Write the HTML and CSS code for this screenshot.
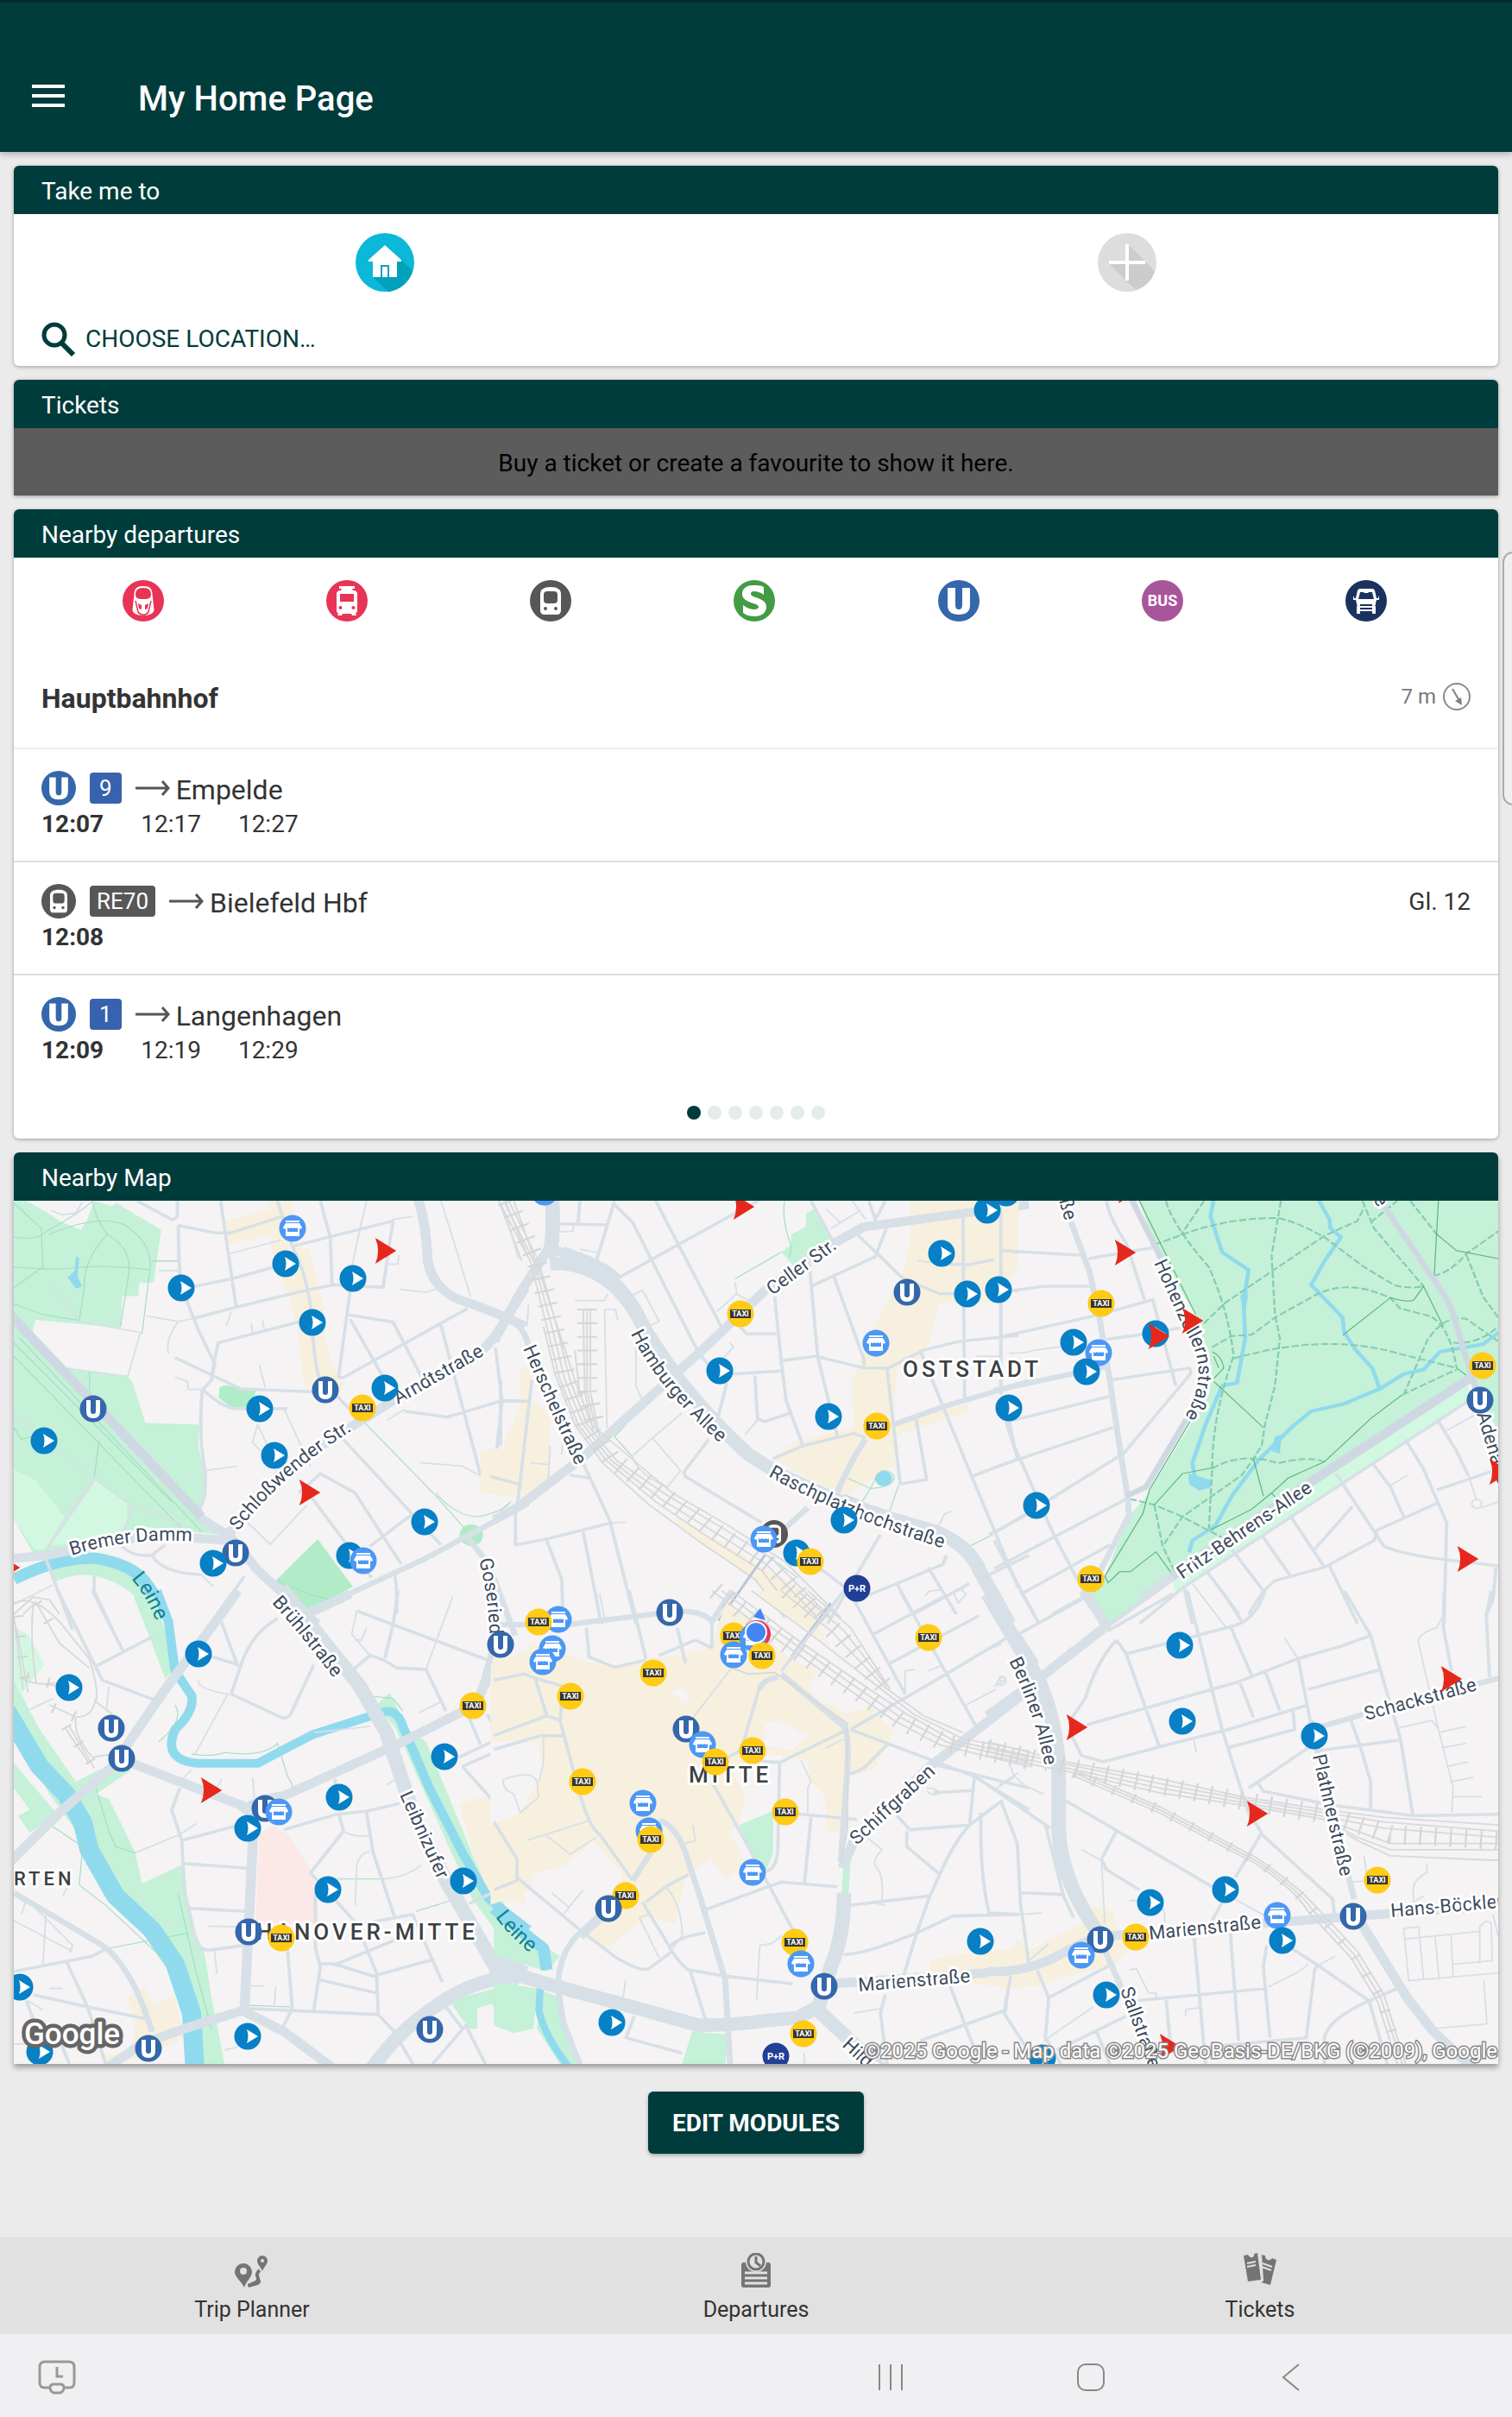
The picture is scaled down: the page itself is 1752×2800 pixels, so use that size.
FILE: index.html
```html
<!DOCTYPE html>
<html lang="en">
<head>
<meta charset="utf-8">
<meta name="viewport" content="width=device-width, initial-scale=1">
<title>My Home Page</title>
<link rel="stylesheet" href="styles.css">
</head>
<body>
<svg class="defs" aria-hidden="true">
  <defs>
    <symbol id="m-ice" viewBox="0 0 48 48"><circle cx="24" cy="24" r="24" fill="#e83456"/><path d="M24 7c8 0 10 3 10.500 9l2 18c0 4-4 7-12.500 7s-12.500-3-12.500-7l2-18C14 10 16 7 24 7z" fill="#fff"/><path d="M24 9c7 0 8.500 3 9 7 0 4-1 6-9 6s-9-2-9-6c.5-4 2-7 9-7z" fill="#e83456"/><path d="M15 24l3 13q2 3 6 3t6-3l3-13" fill="none" stroke="#e83456" stroke-width="1.500"/><path d="M18 27l4 2v5l-3-1zM30 27l-4 2v5l3-1z" fill="#e83456"/></symbol>
    <symbol id="m-ic" viewBox="0 0 48 48"><circle cx="24" cy="24" r="24" fill="#e83456"/><path d="M15 7h18v3h-3l1 2q5 0 5 4v20q0 2-2 2l1 3h-5l-1-2H19l-1 2h-5l1-3q-2 0-2-2V16q0-4 5-4l1-2h-3z" fill="#fff"/><path d="M16 16h16v9H16z" fill="#e83456"/><circle cx="16.500" cy="32" r="2" fill="#e83456"/><circle cx="31.500" cy="32" r="2" fill="#e83456"/></symbol>
    <symbol id="m-re" viewBox="0 0 48 48"><circle cx="24" cy="24" r="24" fill="#575757"/><path d="M24 8c8 0 12 3 12 8v19q0 5-5 5H17q-5 0-5-5V16c0-5 4-8 12-8z" fill="#fff"/><rect x="16" y="13" width="16" height="14" rx="4" fill="#575757"/><circle cx="18" cy="33" r="2" fill="#575757"/><circle cx="30" cy="33" r="2" fill="#575757"/></symbol>
    <symbol id="m-s" viewBox="0 0 48 48"><circle cx="24" cy="24" r="24" fill="#439b45"/><path d="M35 8v9c-4-3-8-4-11-4-3 0-4 1-4 3 0 5 18 4 18 15 0 7-6 11-13 11-5 0-10-1-14-4v-9c5 4 10 5 13 5s5-1 5-3c0-5-19-4-19-15C10 9 16 6 23 6c4 0 8 0 12 2z" fill="#fff"/></symbol>
    <symbol id="m-u" viewBox="0 0 48 48"><circle cx="24" cy="24" r="24" fill="#3467ab"/><path d="M11 9h9v20q0 5 4 5t4-5V9h9v20q0 11-13 11T11 29z" fill="#fff"/></symbol>
    <symbol id="m-bus" viewBox="0 0 48 48"><circle cx="24" cy="24" r="24" fill="#a9559a"/><text x="24" y="30" class="sym-text" font-size="18">BUS</text></symbol>
    <symbol id="m-van" viewBox="0 0 48 48"><circle cx="24" cy="24" r="24" fill="#1c325e"/><path d="M17 10h14q2 0 3 2l2 9h2v-2h1v4h-3l-1 4v2h-2q2 0 2 2v8h-4v-3H17v3h-4v-8q0-2 2-2h-2v-2l-1-4H9v-4h1v2h2l2-9q1-2 3-2z" fill="#fff"/><path d="M17 14h4l1 1h4l1-1h4l2 8H15zM17 28h14v2H17zM17 32h14v2H17z" fill="#1c325e"/></symbol>

    <symbol id="p-stop" viewBox="-16 -16 32 32" overflow="visible"><circle r="15.500" fill="#0780c6"/><path d="M-1-8L12 0-1 8Q2 0-1-8z" fill="#fff"/></symbol>
    <symbol id="p-u" viewBox="-16 -16 32 32"><circle r="15.500" fill="#3467ab"/><path d="M-8-10h5V3q0 3 3 3t3-3v-13h5V3q0 8-8 8T-8 3z" fill="#fff"/></symbol>
    <symbol id="p-taxi" viewBox="-16 -16 32 32"><circle r="15.500" fill="#ffcb14"/><rect x="-12" y="-5" width="24" height="10" fill="#38352d"/><text y="3" class="sym-text" font-size="9">TAXI</text></symbol>
    <symbol id="p-shop" viewBox="-16 -16 32 32"><circle r="15.500" fill="#4d97f5"/><path d="M-8-9H8v2H-8zM-8-6H8l3 5q-1 3-3 1v9H-8v-9q-2 2-3-1z" fill="#fff"/><path d="M-6-1q2 2 4 0 2 2 4 0 2 2 4 0V4H-6z" fill="#4d97f5"/></symbol>
    <symbol id="p-park" viewBox="-16 -16 32 32"><circle r="15.500" fill="#213f94"/><text y="4" class="sym-text" font-size="11">P+R</text></symbol>
    <symbol id="p-red" viewBox="-16 -17 32 34"><path d="M-13-16L13 0-13 16Q-6 0-13-16z" fill="#e6281c"/></symbol>
  </defs>
</svg>

<header class="app-bar">
  <button class="menu" aria-label="Menu"><span></span><span></span><span></span></button>
  <h1>My Home Page</h1>
</header>

<main>
  <section class="card">
    <h2>Take me to</h2>
    <div class="places">
      <button aria-label="Home"><svg viewBox="0 0 68 68"><circle cx="34" cy="34" r="34" fill="#0bb8d7"/><path d="M52 30L66 44A34 34 0 0 1 38 68L20 51z" fill="#00a1bb"/><path d="M34 14L53 31v2h-5v18H20V33h-5v-2z" fill="#fff"/><path d="M29 51V37h10v14h-2V39h-6v12z" fill="#0ba0bd"/></svg></button>
      <button aria-label="Add place"><svg viewBox="0 0 68 68"><circle cx="34" cy="34" r="34" fill="#ddd"/><path d="M35 13L66 44A34 34 0 0 1 44 66L14 36 33 33z" fill="#ccc"/><path d="M34 13v42M13 34h42" stroke="#fff" stroke-width="4"/></svg></button>
    </div>
    <button class="choose"><svg viewBox="0 0 40 42"><circle cx="15" cy="16" r="12" fill="none" stroke="#003c3b" stroke-width="5"/><path d="M24 26L37 39" stroke="#003c3b" stroke-width="6"/></svg>CHOOSE LOCATION…</button>
  </section>

  <section class="card square">
    <h2>Tickets</h2>
    <p class="empty">Buy a ticket or create a favourite to show it here.</p>
  </section>

  <section class="card">
    <h2>Nearby departures</h2>
    <div class="modes">
      <button aria-label="High-speed train"><svg><use href="#m-ice"/></svg></button>
      <button aria-label="Long-distance train"><svg><use href="#m-ic"/></svg></button>
      <button aria-label="Regional train"><svg><use href="#m-re"/></svg></button>
      <button aria-label="Suburban train"><svg><use href="#m-s"/></svg></button>
      <button aria-label="Light rail"><svg><use href="#m-u"/></svg></button>
      <button aria-label="Buses"><svg><use href="#m-bus"/></svg></button>
      <button aria-label="On-demand"><svg><use href="#m-van"/></svg></button>
    </div>
    <div class="station">
      <h3>Hauptbahnhof</h3>
      <span class="distance">7 m <svg viewBox="0 0 32 32"><circle cx="16" cy="16" r="15" fill="none" stroke="#8a8a8a" stroke-width="2"/><path d="M11 7l7 12" stroke="#808080" stroke-width="2"/><path d="M14 21l7-4 1 9z" fill="#808080"/></svg></span>
    </div>
    <ul class="departures">
      <li>
        <div class="line"><svg class="mode"><use href="#m-u"/></svg><span class="badge u">9</span><svg class="arrow" viewBox="0 0 40 20"><path d="M0 10h38M31 2l7 8-7 8" /></svg><span class="goal">Empelde</span></div>
        <div class="times"><b>12:07</b><span>12:17</span><span>12:27</span></div>
      </li>
      <li>
        <div class="line"><svg class="mode"><use href="#m-re"/></svg><span class="badge">RE70</span><svg class="arrow" viewBox="0 0 40 20"><path d="M0 10h38M31 2l7 8-7 8" /></svg><span class="goal">Bielefeld Hbf</span><span class="track">Gl. 12</span></div>
        <div class="times"><b>12:08</b></div>
      </li>
      <li>
        <div class="line"><svg class="mode"><use href="#m-u"/></svg><span class="badge u">1</span><svg class="arrow" viewBox="0 0 40 20"><path d="M0 10h38M31 2l7 8-7 8" /></svg><span class="goal">Langenhagen</span></div>
        <div class="times"><b>12:09</b><span>12:19</span><span>12:29</span></div>
      </li>
    </ul>
    <div class="dots"><i class="on"></i><i></i><i></i><i></i><i></i><i></i><i></i></div>
  </section>

  <section class="card square map-card">
    <h2>Nearby Map</h2>
    <svg class="map" viewBox="16 1391 1720 1000" role="img" aria-label="Map of Hannover">
      <!-- north-west -->
      <g transform="translate(0 1330) scale(.3827 .3444)">
        <path class="green" d="M42 178H80L140 215 180 245 245 275 265 240 285 178 340 195 352 185 488 275 465 452H422L418 498H370L366 605 108 578 95 630 190 738 387 768 402 790 440 925 603 930 600 1000 622 1100 620 1160 605 1220 660 1300 440 1275 130 1370H105L42 1250zM165 1460Q200 1440 250 1435Q350 1440 420 1520L440 1570H490L440 1470 380 1400 260 1380 140 1400z"/>
        <path class="green-light" d="M42 1080L110 1120 195 1240 140 1350H105L42 1250zM284 1115L385 1195V1250L365 1300 215 1330 142 1340z"/>
        <path class="green-deep" d="M665 805L680 798 775 812 765 872H700L662 840zM962 1315L1068 1475 935 1556 835 1455z"/><circle class="green-deep" cx="1427" cy="1302" r="36"/>
        <path class="cream" d="M805 178H885L900 330 935 340 975 520 985 650 1010 740 1045 800 1020 835 920 795 900 600 880 520 820 340 820 290 690 325 680 245 820 205zM1568 890L1530 970 1528 1020 1505 1025 1490 1160 1568 1170z"/>
        <path class="water" d="M230 365L240 370 235 430 248 465 230 473 205 435 225 415z"/>
        <path class="river" stroke-width="38" d="M42 1450Q180 1375 290 1380 400 1400 440 1460 480 1520 500 1580"/>
        <path class="trail" d="M42 185L125 270 130 400 42 470M42 300Q120 310 140 280 220 235 280 180 290 240 325 290 250 380 255 470L240 580M325 290Q400 340 390 420L365 600M150 290Q300 220 380 260 460 320 455 400L430 625M42 400Q150 410 200 405 320 390 455 410M42 525L130 560 240 580M460 380H540M42 655L520 1190M42 700L560 1290M60 640L610 1290M270 750Q280 850 240 890M300 985L285 1110M42 940L65 980 110 965M1105 925L1320 1170 1415 1290M1320 1160Q1380 1240 1450 1240 1530 1220 1545 1190M835 1455L935 1500 1000 1520"/>
        <path class="road s" d="M150 450L245 585 425 620 387 768 200 740M445 565L540 583 590 572M540 583Q500 640 510 690M155 210L190 225 230 218 250 180M415 178M1335 178L1370 300 1425 500M1110 178L1090 270 1050 480M1210 475L1290 485 1320 475M1190 240L1250 230M695 355L850 310M480 412H545M700 550L685 600M785 730L803 805M530 770L568 785 570 812 610 812M780 930L765 990 790 1020M780 930L810 1000M860 877L940 1070M620 1085L720 1070M1270 1058L1400 1070 1450 1100M1175 390H1205L1208 360M1172 915L1225 880M765 620L760 590M800 610L795 580M750 1260L818 1333 930 1200M42 900L285 1112 390 1195 570 1275M390 1195Q400 1240 365 1300M42 1535L160 1470M610 1435L645 1475"/>
        <path class="road" d="M415 178L520 240Q540 240 537 210V178M540 260L650 285 700 285 855 230M540 260Q540 400 550 470L600 610 650 725 640 780 612 815Q605 900 610 1000L622 1100 620 1170 605 1215M668 178L715 535M840 178L885 330Q940 450 945 600 950 700 965 770L1060 880M970 178L1000 300 1005 460M887 330L1190 245 1160 468 1010 460 920 480 715 535 590 572M590 465L700 440 830 400M905 585L660 655 640 770M530 705L730 810 950 820M612 810Q680 880 720 877H870M1060 480L1025 770 1040 772 1415 540M1050 560L1190 585 1290 800M1060 575L1165 780M1335 595L1455 1100 1568 1130M1500 670L1520 850 1495 1105M1225 885L1355 905 1520 850H1568M1040 980L1335 1335M905 1160L970 1095 1075 1160 1215 1400M940 1170L1125 1445M1120 1340L1250 1230M140 1350L285 1115M740 1440L660 1568M135 1370L220 1620M285 1440V1490L340 1620M370 1340Q400 1375 460 1370L500 1335M460 1370Q490 1430 610 1435M1195 1430Q1205 1500 1200 1568"/>
        <path class="road m" d="M920 1570L1280 1385 1600 1195M1415 1310L1480 1400 1560 1640"/>
        <path class="road l" d="M600 1240L700 1310 780 1420 960 1600M690 1300L860 1080 1060 940 1190 850 1460 680Q1500 640 1540 560L1590 470M1265 170Q1290 250 1295 380 1310 470 1390 510 1500 550 1590 600M42 1380L140 1370 420 1310H560L690 1320"/>
        <path class="road l blue" d="M30 560L610 1240"/>
        <path class="rails" d="M1510 178L1580 380M1530 178L1600 370M42 1568L100 1510 150 1520 180 1568M70 1568L110 1525"/>
      </g>
      <!-- north -->
      <g transform="translate(580 1330) scale(.3827 .3444)">
        <path class="cream" d="M1240 178H1568V395L1500 520H1330L1300 640 1280 700 1200 740 1190 920 1415 860V885L1200 965 1195 1065 1060 1160 1000 1155 820 1040 900 985 1070 940 1065 780 1085 720 1110 650 1215 430 1240 310zM58 740L90 745 95 850 150 905 145 1120 60 1175-60 1160V1020L50 1000 58 850zM540 1240L900 1480 980 1568H900L530 1260z"/>
        <path class="green" d="M950 205L1005 310 885 395 850 350 880 325V290L925 265V220z"/><circle class="water" cx="1160" cy="1112" r="26"/>
        <path class="trail" d="M860 178Q850 240 880 330L875 370M710 440L850 350M1050 1110L1120 1145 1140 1100Q1160 1070 1190 1100 1200 1140 1120 1145L1095 1190 1040 1165M1205 1135L1175 1230M345 970L400 1040M380 930L345 970M0 1220L30 1190M1410 1345L1490 1300M800 1365L900 1445"/>
        <path class="road s" d="M240 340L295 352M225 513H315L325 490M315 540L322 940M315 543H348L355 580M400 495L430 478 480 583 410 620V800L430 850M400 1035L460 975 550 890M400 1040Q420 1100 505 1140L545 1085 460 975M655 550L715 490 710 450M715 490L760 520M670 710L705 670 695 655M740 965L778 915M985 205L1028 250M1000 270L1090 210M1065 178L1105 240M1440 700H1515M1262 378L1340 390M180 282L220 280V258M145 1120L150 1000M90 1058L150 1065M185 1030L190 960M330 1262L380 1258M1320 1285L1345 1230 1365 1222M1285 1505L1300 1490 1340 1485M1370 1490L1385 1530 1410 1500 1390 1480M85 525L80 600M55 375L20 240"/>
        <path class="road" d="M345 178L290 380M345 190L400 250 600 690 630 730M470 178L560 370 670 605M180 255L320 258M240 178L235 250M360 435L700 225 780 178M940 178L1010 320M1080 290L1220 440 1330 490H1420M1115 178L1135 240 1165 178M1135 230V255M1170 265L1135 365 940 465M935 390L960 700 1020 970M1010 435L1100 710V738M830 500L850 720 865 850 915 1000M725 600L745 625H835M850 715L955 700 1100 740H1175L1280 680 1390 650 1568 630M700 760L850 750M770 765L778 910 800 920 880 890M685 790L660 900M1400 225L1405 840M1515 180V800M1515 350H1568M1340 390L1420 392 1515 370M1550 480H1568M1170 740L1210 1130 1290 1115 1258 910M1270 680L1340 870 1425 1100 1568 1480M825 1045L920 1000 1070 960 1105 975M1425 1105L1568 1045M1530 920L1568 1050M630 980L555 1090 560 1105 790 1260M0 850L85 852M0 780V1000M95 780L50 1210M-30 1105L55 1130M250 1060L330 1250 410 1600M45 1210V1335L140 1315 330 1262M140 1320L185 1450 190 1600M250 1290L305 1600M1150 1300L990 1600M1100 1510L1200 1465 1340 1400 1350 1370M1200 1465L1250 1568M1295 1410L1380 1568M1250 1568L1420 1465M1470 1440L1600 1370M1480 1300L1600 1230M950 1400L1040 1475M210 1100L270 1110"/>
        <path class="road m" d="M1190 930L1340 870 1600 785M1105 980Q1060 1050 1015 1170M30 570Q80 620 85 670M860 1280L930 1210M190 340Q330 390 360 440"/>
        <path class="road l" d="M1600 190L1300 235 1100 265 960 350 800 480 600 690 440 850 250 1040 50 1210-20 1250M-20 650Q60 480 110 400L150 330M160 340Q230 370 340 440 400 500 440 600L540 780"/>
        <path class="road xl" d="M155 160Q165 300 145 370M150 390Q250 380 340 460 400 520 440 620L540 780Q640 920 750 1030L850 1100 1010 1180 1180 1245 1320 1290Q1420 1340 1450 1420L1540 1600"/>
        <path class="rails" d="M-5 178L90 380 140 600 180 780 235 930 320 1050 470 1190 630 1310 790 1420 900 1580M10 178L100 380 155 600 195 780 250 930 335 1050 485 1180 645 1290 805 1400 960 1580M25 178L115 380 170 600 210 780 262 930 350 1050 500 1165 660 1270 820 1380 1000 1580M40 178L128 450 225 780 275 930 520 1160 690 1270 860 1390 1030 1580M130 600L165 760 225 930 310 1060 450 1200 610 1330 770 1450 860 1580M250 540L255 820 280 950M262 540V820L290 950M272 540V820L300 970M225 680L240 830"/>
        <path class="ties" d="M20 178L108 380 160 600 200 780 255 930 340 1050 495 1170 650 1290 810 1400 980 1580M262 540V820L290 950"/>
        <path class="bridge" d="M800 1370L660 1590M990 1555L970 1590"/>
      </g>
      <!-- north-east -->
      <g transform="translate(1152 1330) scale(.3827 .3444)">
        <path class="cream" d="M0 178H75L55 400 0 415z"/>
        <path class="green" d="M440 178H1526V700L1450 770 1480 860 1526 950V700L1430 800 545 1440 345 1600 330 1568 285 1500 335 1440 410 1235 455 1180 650 830 660 740 610 560 490 340z"/>
        <path class="green-light" d="M1430 790L1450 840 1340 930 1260 980 550 1500 540 1450z"/>
        <path class="river" stroke-width="12" d="M665 170L655 230 690 350 770 410 755 520 760 640 735 790 690 800 640 930 600 1060 610 1120M980 170L1015 240 1018 270 1050 300 1000 380 960 460 1055 570 1060 620 1095 680 1145 740 1167 810M1540 610L1480 660 1350 685 1300 745 1240 760 1167 810 1060 860 960 885 900 940 800 1050 720 1170 670 1270 600 1320 590 1360"/>
        <path class="water" d="M588 1095L660 1118 655 1142 620 1152 590 1130zM745 500L765 460 768 500 758 560zM850 970L870 965 865 1028 840 1020z"/>
        <path class="walk" d="M520 178Q540 260 650 400 710 550 725 700 660 900 660 1080L650 1280M485 325L565 293Q700 235 860 235 920 250 1000 300L1120 400 1210 460Q1250 475 1300 465M635 178L565 293M868 178L840 360 850 560 865 640 850 800 820 930 810 1000 785 1045 750 1100 570 1240 510 1340M635 590L700 520 1000 295 1100 245 1120 200M660 670L720 632 780 628 850 570 980 490Q1080 440 1200 505L1230 540 1320 565Q1380 600 1400 740M725 708Q1000 620 1220 690L1400 740M485 1200L510 1340 545 1420M660 1078Q750 1020 860 1060 950 1035 1000 1055M410 1180L485 1200 560 1235 690 1310M1115 178L1150 270 1300 465M1260 178L1340 290M1330 430Q1380 420 1430 355L1526 280M1430 360L1480 500 1526 570M1240 830L1310 650Q1360 560 1430 575L1526 650M1235 830L1400 745M1140 250L1220 178M1390 655Q1470 660 1526 600"/>
        <path class="lane" d="M440 178L610 560M630 850L470 1150 450 1230 335 1440 345 1462 380 1425H412L490 1358 540 1435M665 785L815 940M655 1285L780 1215 840 1160 890 1110 1000 1055 1140 910 1235 830M785 1045L815 1170M840 1160L855 1180M1055 630L1200 503Q1250 520 1270 512L1300 465 1360 600M1345 178L1332 435M1340 290L1400 345 1526 372M1400 740L1430 765M660 1076L570 1095 485 1200M660 685Q690 700 695 740L665 775M665 700L680 740"/>
        <path class="road s" d="M45 690Q100 690 120 680L200 668M1370 950L1460 895M1200 1135L1252 1100M1435 1100L1460 1180M600 1465L700 1610M1475 1210L1526 1190"/><circle class="road s" cx="1461" cy="1197" r="15"/>
        <path class="road" d="M0 640L320 560 480 510 550 800M340 178Q350 240 400 320L455 510M20 345L260 360M285 372L480 335M50 480L150 465H290M340 643L460 625 590 600M355 780L590 740Q600 750 590 765L390 1030M60 915L350 835M0 1075L360 940M20 200V830M45 915L60 1000 180 1300 280 1510M0 1295L120 1215 380 1035M0 1415L400 1180M90 1495L350 1335M0 1320L120 1568M175 1568L270 1510M720 1350L815 1490M645 1425L740 1568M810 1300L900 1445M895 1235L1000 1410M1035 1095L1180 1340Q1250 1370 1370 1385L1526 1405M1145 1060L1200 1140 1240 1240M1245 980L1300 1080 1370 1260 1362 1600M1340 910L1400 1020 1435 1100M1340 1150L1526 1080M1150 1290L1340 1195M970 1350L1085 1205M770 1568L815 1490 850 1455 1000 1410 1150 1320 1160 1290M1015 1405L1100 1600M575 1480L600 1600M1520 1405L1510 1520 1490 1568M1450 840L570 1480 440 1600"/>
        <path class="road m" d="M0 815L340 735M230 240L290 420 320 580 350 780 375 970 405 1180 408 1235 285 1500"/>
        <path class="road m blue" d="M415 170L500 360 590 580 650 720M610 860L460 1140 400 1170M1180 195L1330 440Q1390 530 1400 600L1455 800 1500 960"/>
        <path class="road l" d="M540 1440L340 1600M275 1480L340 1610"/>
        <path class="road l blue" d="M1440 775L970 1115 540 1440"/>
      </g>
      <!-- south-west -->
      <g transform="translate(0 1850) scale(.3827 .3571)">
        <path class="green" d="M42 540L170 700 90 765 55 710 90 690 42 620zM42 270L120 430 230 600 300 560 400 560 290 640 330 655 410 830 430 930 550 870 580 1060 620 1160 640 1300 680 1515H600L590 1350 530 1170 340 970 270 820 150 640 42 440zM405 0H470L530 230 500 265 460 150zM1140 350L1180 310 1235 430 1290 470 1440 860 1568 1060V1180L1430 980 1200 430zM1360 1310L1568 1250V1410L1520 1400 1490 1320 1445 1335V1400H1420z"/>
        <path class="green-light" d="M42 100L85 120 135 220 60 320 42 270z"/>
        <path class="pink" d="M825 740L870 770 955 910 950 1060H775L785 770z"/>
        <path class="cream" d="M385 1300L440 1265 460 1320 530 1295 555 1430 540 1440 420 1500 310 1515V1490L400 1475 410 1380zM1590 170L1480 240V300L1530 310 1540 360 1590 340zM1590 550L1490 600 1495 640 1390 670 1440 860 1480 960 1590 1000z"/>
        <path class="river" stroke-width="58" d="M20 370L120 550 200 640 250 730 270 820 350 970 460 1080 530 1190 580 1350 590 1530"/>
        <path class="river" stroke-width="28" d="M475-20L510 80 530 240 580 320Q590 370 530 430 490 530 600 540H780Q850 500 950 445L1140 380Q1200 350 1220 420L1300 620 1400 830 1480 980 1600 1080"/>
        <path class="trail" d="M580 510Q640 520 680 505 800 520 840 475L870 580 890 620M290 620L330 760 350 810 410 830M540 965L590 1200 640 1400M330 1140L570 1090M1020 915H1150M1260 1020L1365 985M240 935L320 1000 520 1200M160 745L250 810 240 935M755 1325L880 1330M1110 320L1190 330 1220 370M480 470Q560 400 530 350"/>
        <path class="rails" d="M42 60L70 300M50 100L85 310M42 20Q100-10 180 80L270 200Q300 300 290 340L340 380M110 20L180 150 270 230M100 30Q90 150 110 280L190 290M60 260Q120 300 200 270M150 350L230 390Q280 390 290 330M230 390Q220 450 280 520L340 510M200 430L270 540M210 420L285 555"/>
        <path class="ties short" d="M55 60L80 310M80 260L190 290M160 360L230 390M200 420L285 550M110 20L180 130"/>
        <path class="road s" d="M590 510L690 315Q600 300 600 270M1080 45L1065 120 1120 190M1110 100L1095 140 1075 140M1290 235L1370 0M1270 375L1335 340M410 830L545 770 595 735M330 290L322 370M90 365L160 330M545 600L580 560M765 585L770 650M1170 610L1200 590M1160 915Q1230 910 1275 870M1075 1000Q1080 900 1080 870 1090 830 1120 825M630 1068L715 1070M650 1150L657 1225M835 1265L830 1330M755 1262H800M42 1050L220 1150M65 1030L80 980 220 1130 210 1155M130 1195L140 1010M150 1270H190M85 1310L130 1340M1040 760Q1070 780 1120 775M190 970L220 910M42 1450H100M680 1470L720 1460M670 590Q670 600 640 640M950 440L1120 420"/>
        <path class="road" d="M175-20L310 270 470 335M280-20L375 180M290 225L460 130M665 65L720 225M630 190L720 220M950 220L880 380Q865 400 850 390L700 315 730 220Q760 120 840 70M1205-20L1190 90 1165 200M1080 45L1190 90 1490 210M1070 235L1120 190Q1160 200 1200 230L1290 235 1350 370M1390 520L1590 420M1400 550L1590 460M1400 550L1500 670 1560 880M1420 390L1455 480M1475 380L1510 450M545 620L520 690 550 790 560 960 590 1100Q600 1150 640 1145L740 1130M550 790L740 735M560 865L750 880M575 1010L745 1020M860 755L1020 705 1110 695 1210 670M1025 700L1040 760 940 895 1080 1060 1140 1220 1145 1350M1110 700L1130 830 1195 1040M955 960V1140L970 1200 950 1340M970 1190H1010L1130 1230 1315 1175M1010 1195L1250 1090M960 1240L1140 1285M870 1140L885 1335 850 1410M750 1335L1145 1355 1190 1405M1100 1060L1250 1030 1310 1180 1340 1250M42 1215L210 1180 280 1165 315 1145M200 1180L265 1330 320 1515M100 1290L265 1330 450 1370M80 1310L100 1370M185 1450L210 1515M1310 1515L1410 1390 1470 1515M1190 1405L1250 1515M1420 995L1590 910M1400 1400L1350 1330M1015 590V640"/>
        <path class="road m" d="M42 960L310 1130Q400 1200 460 1410"/>
        <path class="road l" d="M30 860L180 700 340 550 500 300 660 70 720-20M400 540L740 680M735 700Q760 660 860 645L1200 480 1440 350 1510 180M770 700L740 1340M740 1340L560 1400 430 1450 320 1530M740 1345L860 1410 1010 1530M920 60L1060-10"/>
        <path class="road xl" d="M850-30L1000 170 1090 290 1170 440 1250 700 1350 920 1500 1200M1120 1540Q1200 1410 1330 1320 1450 1230 1590 1230M1490 1160L1590 1220"/>
      </g>
      <!-- south -->
      <g transform="translate(580 1850) scale(.3827 .3571)">
        <path class="cream" d="M-30 180L70 200 90 150 260 210 350 230 440 200 540 190 640 160 680 20 720 40 860 190 960 240 930 300 960 330 1050 380 1120 355 1190 440 1130 560 1060 580 1050 760H990L980 640 940 600 930 530 820 510 700 560 740 650 720 740 690 760 740 860 680 920 640 850 560 900 530 1060 440 1040 320 1140 250 1100 380 1000 340 890 230 830 200 870 95 900 90 950-30 1000zM1568 1140L1380 1160 1300 1180V1240L1568 1270zM760-20L1000 160 940 60 870-20z"/>
        <path class="land" d="M515 310L550 295 580 320 560 345zM-30 470H110L130 560 60 700-30 740zM200 870L280 790 370 900 320 990 240 1080 95 960V900zM800 410L840 400 930 450 880 500 800 480z"/>
        <path class="green" d="M722 740L825 695V830L805 885 770 850zM1040 840L1060 850 1050 1040 1030 1150 1005 1155 1030 1000zM-20 1030L180 1165 140 1215-20 1160zM-20 1250L110 1270 100 1400 40 1415-20 1390zM130 1280L180 1300 190 1380 245 1515H180L110 1400zM580 1410L690 1420 680 1515H550z"/>
        <path class="river" stroke-width="36" d="M-20 1010L70 1090 130 1140 140 1210"/><path class="river" stroke-width="22" d="M120 1270 116 1340Q130 1420 210 1530"/>
        <path class="bridge" d="M690-10L650 60M1000 20L880 195"/>
        <path class="road s" d="M300-10L315 70M580 395L700 230M15 590Q100 560 110 600L115 650 60 700 40 640Q0 620 10 590M130 455V540L115 600M80 790L270 725M135 770L210 835 290 780M560 800L590 790 582 740M155 960L205 1005M190 1030L250 950M500 940Q550 1000 550 1100L520 1140M420 1040L480 1170M420 1040L450 1030M775 1310L785 1130 820 1125 850 1100M985 490L1040 460M910 530L940 600 930 620V700M1110 780L1155 820Q1120 860 1140 880 1160 900 1155 990M1140 995L1165 1000M1410 350L1500 300M1225 310V240L1255 235M1295 240L1340 220M370 1310L378 1245M1290 620Q1320 620 1330 635 1310 650 1290 630M1070 1350L1150 1335M1500 290Q1510 250 1530 265 1530 290 1510 285M920 1515V1480M1510 610L1568 570"/>
        <path class="road" d="M260 100L268 195 345 228 440 205M480 190L590 140 640 165V70M390-20L440 200M535 100L560 215M785 290L730 490M690 520L740 490M760 520Q800 540 850 535L1050 430M845 540L840 800Q840 880 805 890M860 700L1080 722M940 715L920 930M620 1015L810 940 850 925 1020 940M-20 450L140 385 180 400 240 640Q270 750 300 770L400 920M105 265L140 385M110 265L190 290 180 400M-20 495L120 450H195M-20 730L50 850V920L-20 950M55 915L240 1080 350 1170Q430 1220 450 1205L520 1150M440 990L500 940 570 900M430 990L520 1150Q550 1200 570 1210L680 1230 885 1255M515 1130Q550 1100 620 1090M575 1215L620 1370M640 600L740 790 820 950 890 1090M1060 430L1430 580 1600 690M1060 575L1100 555 1170 480M1060 1000L1300 970M1520 660L1420 740M1040 1160Q1100 1160 1260 1090L1370 1035 1568 1030M1200 710L1240 755 1420 740Q1370 800 1330 900L1230 810V760M1220 1230L1260 1090 1300 970 1330 900M1455 700Q1450 900 1480 1030M1435 580L1420 740M1310 635L1430 628M1130 120L1340 0M1180 215L1450 60M1060 430L1350 250 1568 110M1060-10L1225 315M1210-20L1440 420M1165 1290L1150 1350 1170 1515M1360 1260L1440 1480M1270 1440L1530 1340 1530 1300M405 1360L380 1430 550 1480M-20 270L70 250 110 265M850 240L1040-20M1300 540L1600 620"/>
        <path class="road m" d="M840 260Q790 270 785 300M-10 90H200L470 55Q600 30 640 80L700-20M400 920L455 830M480 725Q530 740 560 830L600 960 680 1240 695 1515M850 250L1040 420Q1055 440 1050 560L1030 860M330 1030L240 1090Q170 1160 175 1280L190 1380 245 1530M-10 110Q-30 200-60 300"/>
        <path class="road l" d="M330 1010L240 1100M1035 880L1070 790 1300 550 1600 300M1000 1255L1600 1210"/>
        <path class="road xl" d="M-30 1200L140 1255 400 1330 600 1390Q700 1390 800 1375L900 1365 960 1330M1040 960Q1040 1100 1000 1200L960 1340 1060 1440 1150 1530"/>
        <path class="rails" d="M640-20L840 140 1040 290 1190 400 1330 480 1600 550M670-20L860 130 1060 280 1210 390 1350 470 1600 535M700-20L900 140 1090 280 1230 380 1370 465 1600 520M760-20L950 130 1130 280 1250 380 1400 460 1600 500M850-20L1000 110 1160 290 1280 385 1400 440M900-20L1040 110 1170 290M930-20L1060 100 1180 300M700 230L750 250 830 245 1050 410V760L1030 860"/>
        <path class="ties" d="M650-20L860 150 1060 290 1210 400 1350 475 1600 530M870-20L1010 110 1170 300"/>
      </g>
      <!-- south-east -->
      <g transform="translate(1152 1850) scale(.3827 .3571)">
        <path class="green" d="M300 0H455L345 83z"/>
        <path class="cream" d="M295 1000L360 1020 375 1090 410 1140 350 1210 330 1200 130 1260 20 1275V1240L-20 1245V1160L60 1160V1120L80 1115 100 1150 280 1050z"/>
        <path class="road s" d="M1360 60L1340 100Q1280 120 1285 150L1345 430M880 135L920 200M1225 425L1325 400 1345 430 1390 620 1385 700M1345 440L1430 420M1355 490L1430 475M1370 550L1435 535M1380 600L1450 585M1390 648H1478M1240 1075L1285 1070 1300 1240 1255 1245zM1240 1110L1470 1085M1335 1100L1347 1238M1383 1095L1390 1235M1255 1245L1526 1220M1510 1030L1526 1100M1490 1385L1335 1400M1482 1245L1492 1385M1470 1190V1070Q1490 1040 1505 1060L1508 1180 1385 1192M265 820L325 855 335 1060M605 465L612 505M1120 840L1130 920 1085 925M1310 865V895Q1260 920 1270 970V990L1300 970M45 540L60 580 90 610 150 640M60 585L0 625M580 1360V1338L620 1333M410 1210L430 1205 468 1285H490V1310M950 1190Q940 1210 830 1265M975 1200L1032 1165M0 290Q40 270 30 260 10 250 20 275M220 190Q220 160 250 165M75 1030L145 1025M105 1180L165 1125M410 985H470M515 1060Q520 1030 510 1010M830 1040L720 975M150 1440L300 1330"/>
        <path class="road" d="M80-20L135 85M75 120L270 5M75 120L130 210 120 240M-20 170L20 150M370 140L400 185 720 95Q790 80 820-20M400 185L500 485M345 110L540-10M370 140Q310 210 275 330L230 400M230 440L265 515 330 535 560 470 710 430 950 350M280 415L740 275 920 200 1050 160 1140 125M585-20L690 430 770 700 810 765M690-20L750 80M715 95L780 255M820 240L865 370M745 280L785 390M920 200L960 420M1060-20L1140 125 1170 240 1230 460 1268 710M950 300L1170 235M705 490L910 430 905 370M950 490Q800 600 770 620M800 605L815 630 1020 675 1270 710 1526 705M1080 400L1110 490 1140 600V690M970 500L1225 465M1362-20L1360 100 1385 240M1505-20L1490 60 1500 260M-20 610L170 750M215 660L660 940M370 760L325 850 340 885 440 950M810 765L730 910M810 770L1025 980 1030 1030M690 990L655 1060M20 660L70 800 80 1000 105 1190M80 960L210 965M-20 1025L75 1030M155 740L210 970 240 1040M130 1210L165 1300 155 1430 210 1530M165 1300L350 1195M50 1230L30 1350 120 1500M190 1470L400 1360M430 1310L825 1270M605 1100L640 1515M715 1090L740 1440M825 1130L815 1200 835 1430M540 1470L945 1430 970 1210 980 1195 1135 1310 1220 1270M900 1140L980 1195M1135 1310Q1010 1370 1000 1430V1515M520 1300L535 1470M1135 1310L1190 1515M310 1410L350 1515"/>
        <path class="road m" d="M320 1110L370 1230 430 1380 500 1560M975 480L1090 980M960 430L1120 380 1540 260M960 400V480"/>
        <path class="road l" d="M345 90L130 270-20 385M270-20L345 100M-20 1215Q100 1220 200 1160 280 1110 340 1100L800 1060 1100 1035 1540 1000M1095 1030L1250 1300 1330 1410 1450 1530"/>
        <path class="road xl" d="M-20-10L130 260Q190 400 195 560V750Q200 900 290 1050L320 1100"/>
        <path class="rails" d="M-20 470L240 540 500 590 760 650 1000 690 1180 715 1530 740M-20 485L240 548 500 605 760 658 1000 700 1180 730 1530 760M-20 500L240 560 500 620 760 668 1000 712 1180 750 1530 780M-20 515L240 570 500 635 780 680 1000 722 1100 760 1200 800H1530M1000 722L1100 780 1200 820H1530M1000 725L1100 790 1200 840 1530 855M240 560L500 680 800 850Q920 940 970 1000L1100 1150 1180 1290 1250 1530M240 570L500 690 800 860Q920 950 960 1010L1090 1160 1170 1300 1240 1530M240 580L500 700 800 870Q920 960 950 1020L1080 1170 1160 1310 1225 1530"/>
        <path class="ties" d="M-20 490L240 555 500 612 760 663 1000 705M1020 715L1200 770 1530 790"/><path class="ties short" d="M240 570L500 690 800 860Q920 950 960 1010L1090 1160 1170 1300 1240 1530"/>
      </g>

      <defs>
        <path id="l1" d="M83 1802Q150 1780 230 1786"/><path id="l2" d="M276 1774Q333 1701 420 1650"/><path id="l3" d="M461 1627L568 1566"/>
        <path id="l4" d="M152 1829Q170 1848 186 1890"/><path id="l5" d="M315 1857Q350 1895 395 1955"/><path id="l6" d="M555 1807Q568 1855 568 1920"/>
        <path id="l7" d="M895 1501L985 1435"/><path id="l8" d="M731 1545Q765 1615 850 1685"/><path id="l9" d="M606 1562Q640 1640 675 1715"/>
        <path id="l10" d="M890 1710Q985 1762 1120 1802"/><path id="l11" d="M1337 1463L1372 1540Q1392 1570 1388 1600T1365 1650"/><path id="l12" d="M1370 1830L1535 1718"/>
        <path id="l13" d="M1227 1391L1240 1435"/><path id="l14" d="M1591 1389L1620 1440"/><path id="l15" d="M1711 1638L1745 1750"/>
        <path id="l16" d="M463 2079L515 2195"/><path id="l17" d="M574 2221Q590 2243 625 2272"/><path id="l18" d="M993 2138L1095 2044"/>
        <path id="l19" d="M995 2307L1150 2294"/><path id="l20" d="M975 2370L1050 2440"/><path id="l21" d="M1169 1924Q1202 1990 1213 2060"/>
        <path id="l22" d="M1583 1993L1730 1953"/><path id="l23" d="M1521 2034L1558 2195"/><path id="l24" d="M1612 2221L1760 2208"/>
        <path id="l25" d="M1332 2247L1480 2232"/><path id="l26" d="M1298 2305L1340 2420"/>
      </defs>
      <g class="street">
        <text><textPath href="#l1">Bremer Damm</textPath></text>
        <text><textPath href="#l2">Schloßwender Str.</textPath></text>
        <text><textPath href="#l3">Arndtstraße</textPath></text>
        <text class="stream"><textPath href="#l4">Leine</textPath></text>
        <text><textPath href="#l5">Brühlstraße</textPath></text>
        <text><textPath href="#l6">Goseriede</textPath></text>
        <text><textPath href="#l7">Celler Str.</textPath></text>
        <text><textPath href="#l8">Hamburger Allee</textPath></text>
        <text><textPath href="#l9">Herschelstraße</textPath></text>
        <text><textPath href="#l10">Raschplatzhochstraße</textPath></text>
        <text><textPath href="#l11">Hohenzollernstraße</textPath></text>
        <text><textPath href="#l12">Fritz-Behrens-Allee</textPath></text>
        <text><textPath href="#l13">ße</textPath></text>
        <text><textPath href="#l14">e</textPath></text>
        <text><textPath href="#l15">Adenauer</textPath></text>
        <text><textPath href="#l16">Leibnizufer</textPath></text>
        <text class="stream"><textPath href="#l17">Leine</textPath></text>
        <text><textPath href="#l18">Schiffgraben</textPath></text>
        <text><textPath href="#l19">Marienstraße</textPath></text>
        <text><textPath href="#l20">Hildes</textPath></text>
        <text><textPath href="#l21">Berliner Allee</textPath></text>
        <text><textPath href="#l22">Schackstraße</textPath></text>
        <text><textPath href="#l23">Plathnerstraße</textPath></text>
        <text><textPath href="#l24">Hans-Böckler</textPath></text>
        <text><textPath href="#l25">Marienstraße</textPath></text>
        <text><textPath href="#l26">Sallstraße</textPath></text>
      </g>
      <g class="district">
        <text x="1046" y="1595">OSTSTADT</text>
        <text x="798" y="2065">MITTE</text>
        <text x="297" y="2247">HANOVER-MITTE</text>
        <text x="16" y="2184" class="small">RTEN</text>
      </g>
      <g class="pins" id="pins"></g>
      <g transform="translate(876 1891)"><path d="M5-28L11-14-3-18z" fill="#4285f4"/><circle r="13" fill="#fff"/><circle r="11" fill="#4285f4"/></g>
      <text class="logo" x="28" y="2368">Google</text>
      <text class="credit" x="1735" y="2384">©2025 Google - Map data ©2025 GeoBasis-DE/BKG (©2009), Google</text>
    </svg>
  </section>

  <button class="edit">EDIT MODULES</button>
</main>

<nav class="tabs">
  <a href="#trip"><svg viewBox="0 0 40 40"><path d="M10 12a10 10 0 0 1 10 10c0 6-7 11-9 18C8 33 0 28 0 22a10 10 0 0 1 10-10z"/><circle cx="10" cy="21" r="4" fill="#e1e1e1"/><path d="M32 3a6 6 0 0 1 6 6c0 4-4 7-6 12-2-5-6-8-6-12a6 6 0 0 1 6-6z"/><circle cx="32" cy="9" r="2" fill="#e1e1e1"/><path d="M29 20q-5 4-2 9 1 6-11 9" fill="none" stroke="#747474" stroke-width="4"/><path d="M15 36l14-6q5 8-14 9z"/></svg>Trip Planner</a>
  <a href="#departures"><svg viewBox="0 0 40 40"><rect x="3" y="11" width="34" height="29" rx="3"/><circle cx="20" cy="10" r="12" fill="#e1e1e1"/><circle cx="20" cy="10" r="9" fill="none" stroke="#747474" stroke-width="3"/><path d="M20 4v7l5 4" fill="none" stroke="#747474" stroke-width="3"/><path d="M7 23h26M7 29h26M7 35h26" stroke="#e1e1e1" stroke-width="3"/></svg>Departures</a>
  <a href="#tickets"><svg viewBox="0 0 40 40"><path d="M1 3l5-1q2 4 5 3t2-4l4-1 4 31-15 2z"/><path d="M22 2l4 1q0 4 3 5t5-2l5 2-7 29-11-3q4-1 3-4z"/><path d="M5 12l10-2M5 16l10-2M23 12l11 4M22 16l11 4" stroke="#e1e1e1" stroke-width="2"/></svg>Tickets</a>
</nav>

<div class="system">
  <button aria-label="Recent app"><svg viewBox="0 0 44 40" fill="none" stroke="#999" stroke-width="3"><path d="M13 32H8q-6 0-6-6V8q0-6 6-6h28q6 0 6 6v18q0 6-6 6h-5M14 32q0-4 4-4h8q4 0 4 4t-4 6h-8q-4-2-4-6zM22 8v11h7"/></svg></button>
  <button aria-label="Recents"><svg viewBox="0 0 32 32" fill="none" stroke="#888" stroke-width="2"><path d="M3 1v30M16 1v30M29 1v30"/></svg></button>
  <button aria-label="Home screen"><svg viewBox="0 0 32 32" fill="none" stroke="#888" stroke-width="2"><rect x="1" y="1" width="30" height="30" rx="9"/></svg></button>
  <button aria-label="Back"><svg viewBox="0 0 32 32" fill="none" stroke="#888" stroke-width="2"><path d="M25 1L7 16l18 15"/></svg></button>
</div>
<div class="edge-panel" aria-hidden="true"></div>
<script src="pins.js"></script>
</body>
</html>
```
FILE: pins.js
```js
// Map pins: [symbol, x, y] in map coordinates, drawn in this order.
const pins = [
  ["shop", 339, 1423], ["stop", 331, 1464], ["stop", 210, 1492], ["stop", 409, 1481], ["stop", 362, 1532],
  ["stop", 446, 1608], ["stop", 301, 1632], ["stop", 51, 1669], ["stop", 318, 1686], ["stop", 492, 1763],
  ["stop", 405, 1802], ["u", 273, 1799], ["stop", 247, 1811], ["u", 377, 1610], ["u", 108, 1632],
  ["taxi", 420, 1631], ["shop", 421, 1808], ["red", 447, 1449], ["red", 359, 1729], ["red", 11, 1816],
  ["shop", 631, 1381], ["red", 862, 1398], ["stop", 1166, 1382], ["stop", 1144, 1402], ["stop", 1091, 1452],
  ["stop", 1121, 1499], ["stop", 1157, 1494], ["u", 1051, 1497], ["taxi", 858, 1522], ["stop", 834, 1588],
  ["shop", 1015, 1556], ["stop", 960, 1641], ["taxi", 1016, 1652], ["stop", 1169, 1631], ["stop", 978, 1761],
  ["re", 897, 1777], ["shop", 885, 1783], ["stop", 923, 1799], ["taxi", 939, 1809], ["park", 993, 1840],
  ["red", 1304, 1451], ["stop", 1339, 1545], ["red", 1343, 1548], ["red", 1382, 1530], ["red", 1308, 1379],
  ["taxi", 1276, 1510], ["stop", 1244, 1555], ["shop", 1273, 1567], ["stop", 1259, 1589], ["taxi", 1718, 1582],
  ["u", 1715, 1622], ["red", 1738, 1705], ["stop", 1201, 1744], ["taxi", 1264, 1829], ["red", 1701, 1806],
  ["stop", 230, 1916], ["stop", 80, 1955], ["u", 129, 2002], ["u", 141, 2037], ["red", 245, 2074],
  ["u", 307, 2095], ["shop", 323, 2099], ["stop", 287, 2118], ["stop", 393, 2082], ["stop", 380, 2189],
  ["u", 288, 2238], ["taxi", 326, 2245], ["stop", 23, 2302], ["u", 172, 2373], ["stop", 46, 2377],
  ["stop", 287, 2359], ["u", 498, 2351], ["stop", 537, 2179], ["stop", 515, 2035], ["taxi", 548, 1976],
  ["u", 580, 1905], ["shop", 647, 1876], ["taxi", 624, 1879], ["shop", 640, 1910], ["shop", 629, 1925],
  ["u", 776, 1868], ["taxi", 757, 1938], ["taxi", 850, 1895], ["ice", 877, 1893], ["shop", 872, 1897],
  ["shop", 850, 1917], ["taxi", 883, 1918], ["taxi", 1076, 1897], ["taxi", 661, 1965], ["u", 795, 2003],
  ["shop", 814, 2021], ["taxi", 829, 2041], ["taxi", 872, 2028], ["taxi", 675, 2064], ["shop", 745, 2089],
  ["shop", 752, 2121], ["taxi", 754, 2131], ["taxi", 910, 2099], ["shop", 872, 2169], ["taxi", 725, 2196],
  ["u", 705, 2211], ["taxi", 921, 2250], ["shop", 928, 2275], ["u", 955, 2301], ["stop", 1136, 2249],
  ["stop", 709, 2343], ["taxi", 931, 2356], ["park", 899, 2382],
  ["stop", 1367, 1906], ["stop", 1370, 1994], ["red", 1248, 2001], ["red", 1682, 1945], ["stop", 1523, 2011],
  ["red", 1457, 2101], ["taxi", 1596, 2178], ["stop", 1420, 2189], ["stop", 1333, 2204], ["shop", 1480, 2219],
  ["u", 1568, 2220], ["stop", 1486, 2248], ["u", 1275, 2247], ["taxi", 1316, 2244], ["shop", 1253, 2265],
  ["stop", 1282, 2311], ["red", 1356, 2371], ["stop", 1208, 2384]
];

const layer = document.getElementById("pins");
for (const [kind, x, y] of pins) {
  const use = document.createElementNS("http://www.w3.org/2000/svg", "use");
  const prefix = kind === "re" || kind === "ice" ? "m-" : "p-";
  use.setAttribute("href", "#" + prefix + kind);
  use.setAttribute("x", x - 16);
  use.setAttribute("y", y - 16);
  use.setAttribute("width", 32);
  use.setAttribute("height", 32);
  layer.append(use);
}
```
FILE: styles.css
```css
* { box-sizing: border-box; }

body {
  position: relative;
  display: flex;
  flex-direction: column;
  min-height: 100vh;
  margin: 0;
  overflow-x: hidden;
  background: #ebebeb;
  color: #333;
  font-family: Roboto, "Liberation Sans", sans-serif;
  font-size: 28px;
  line-height: 36px;
}

button {
  padding: 0;
  border: 0;
  background: none;
  color: inherit;
  font: inherit;
  cursor: pointer;
}

svg { display: block; }
h1, h2, h3, p, ul { margin: 0; padding: 0; }
.defs { position: absolute; width: 0; height: 0; }
.sym-text { fill: #fff; font-weight: 700; text-anchor: middle; }

.app-bar {
  display: flex;
  align-items: center;
  gap: 85px;
  height: 176px;
  padding: 50px 37px 0;
  border-top: 3px solid #002d2c;
  background: #003c3b;
  box-shadow: 0 2px 8px rgba(0, 0, 0, .3);
  color: #fff;
}
.menu {
  display: flex;
  flex-direction: column;
  gap: 7px;
  width: 38px;
  margin-bottom: 8px;
}
.menu span { height: 4px; background: #fff; }
h1 { font-size: 40px; font-weight: 500; line-height: 48px; }

main {
  display: flex;
  flex: 1;
  flex-direction: column;
  gap: 16px;
  padding: 16px 16px 97px;
}

.card {
  overflow: hidden;
  border-radius: 6px;
  background: #fff;
  box-shadow: 0 1px 4px rgba(0, 0, 0, .35);
}
.square { border-radius: 6px 6px 0 0; }
.card h2 {
  height: 56px;
  padding: 12px 32px 0;
  background: #003c3b;
  color: #fff;
  font-size: 28px;
  font-weight: 400;
}

.places {
  display: grid;
  grid-template-columns: 1fr 1fr;
  justify-items: center;
  padding: 22px 0;
}
.places svg { width: 68px; height: 68px; }
.choose {
  display: flex;
  align-items: center;
  gap: 11px;
  height: 64px;
  padding: 1px 32px 0;
  color: #003c3b;
}
.choose svg { width: 40px; height: 42px; }

.empty {
  padding: 23px 21px 19px;
  background: #5c5c5c;
  color: #000;
  text-align: center;
}

.modes {
  display: grid;
  grid-template-columns: repeat(7, 1fr);
  justify-items: center;
  padding: 26px 35px 48px 32px;
}
.modes svg { width: 48px; height: 48px; }

.station {
  display: flex;
  align-items: center;
  justify-content: space-between;
  height: 100px;
  padding: 0 32px 16px;
  border-bottom: 2px solid #eee;
}
h3 { font-size: 32px; font-weight: 700; }
.distance {
  display: flex;
  align-items: center;
  gap: 8px;
  margin-bottom: 4px;
  color: #777;
  font-size: 24px;
}
.distance svg { width: 32px; height: 32px; }

.departures { list-style: none; }
.departures li {
  height: 131px;
  padding: 25px 32px 0;
  border-bottom: 2px solid #ddd;
}
.departures li:last-child { border-color: transparent; }
.line {
  display: flex;
  align-items: center;
  height: 40px;
  font-size: 32px;
}
.mode { width: 40px; height: 40px; margin-right: 16px; }
.badge {
  height: 36px;
  padding: 0 8px;
  border-radius: 4px;
  background: #575757;
  color: #fff;
  font-size: 26px;
}
.badge.u { padding: 0 11px; background: #3762ae; }
.arrow {
  width: 40px;
  height: 20px;
  margin: 0 7px 0 16px;
  fill: none;
  stroke: #555;
  stroke-width: 3;
}
.goal { padding-top: 3px; }
.track { margin-left: auto; padding-top: 2px; font-size: 28px; }
.times { display: flex; gap: 43px; margin-top: 4px; }

.dots {
  display: flex;
  justify-content: center;
  gap: 8px;
  padding: 20px 0 22px;
}
.dots i { width: 16px; height: 16px; border-radius: 50%; background: #e6ebeb; }
.dots .on { background: #003c3b; }

.map-card { box-shadow: 0 4px 6px rgba(0, 0, 0, .35); }
.map { width: 100%; background: #f5f3f4; }
.land { fill: #f5f3f4; }
.green { fill: #c4f1d7; }
.green-light { fill: #d3f8e2; }
.green-deep { fill: #b1ecc9; }
.cream { fill: #f7f0de; }
.pink { fill: #fce8e6; }
.water { fill: #90daee; }
.river { fill: none; stroke: #90daee; stroke-linejoin: round; }
.road { fill: none; stroke: #d7e0e7; stroke-width: 10; stroke-linejoin: round; }
.road.s { stroke-width: 5; }
.road.m { stroke-width: 18; }
.road.l { stroke-width: 30; }
.road.xl { stroke-width: 44; }
.road.blue { stroke: #cfd8e2; }
.trail { fill: none; stroke: #a3dcc4; stroke-width: 3; }
.lane { fill: none; stroke: #55b376; stroke-width: 3; }
.walk { fill: none; stroke: #86ccb4; stroke-width: 6; stroke-dasharray: 22 8; }
.rails { fill: none; stroke: #d8d9db; stroke-width: 5; }
.ties { fill: none; stroke: #d4d6d8; stroke-width: 60; stroke-dasharray: 6 40; }
.ties.short { stroke-width: 34; stroke-dasharray: 6 60; }
.bridge { fill: none; stroke: #b9c6d6; stroke-width: 8; }

.street text, .district text {
  stroke: #fff;
  stroke-width: 6;
  stroke-linejoin: round;
  paint-order: stroke;
}
.street { fill: #3d4a5c; font-size: 22px; }
.street .stream { fill: #0e8093; stroke: none; font-size: 24px; }
.district { fill: #3c4043; font-size: 26px; font-weight: 500; letter-spacing: 4px; }
.district .small { font-size: 22px; }
.logo {
  fill: #fff;
  stroke: #666;
  stroke-width: 9;
  stroke-linejoin: round;
  paint-order: stroke;
  font-size: 35px;
  font-weight: 500;
}
.credit {
  fill: #fff;
  stroke: #888;
  stroke-width: 3;
  paint-order: stroke;
  font-size: 24px;
  text-anchor: end;
}

.edit {
  align-self: center;
  height: 72px;
  margin-top: 16px;
  padding: 2px 28px 0;
  border-radius: 6px;
  background: #003c3b;
  box-shadow: 0 2px 4px rgba(0, 0, 0, .3);
  color: #fff;
  font-weight: 700;
}

.tabs {
  display: grid;
  grid-template-columns: repeat(3, 1fr);
  height: 112px;
  background: #e1e1e1;
}
.tabs a {
  display: flex;
  flex-direction: column;
  align-items: center;
  gap: 8px;
  padding-top: 18px;
  color: #333;
  font-size: 25px;
  text-decoration: none;
}
.tabs svg { width: 40px; height: 40px; fill: #747474; }

.system {
  display: grid;
  grid-template-columns: 1fr 232px 232px 232px 140px;
  align-items: center;
  height: 96px;
  padding-top: 4px;
  background: #f0f0f3;
}
.system button { justify-self: center; }
.system svg { width: 32px; height: 32px; }
.system button:first-child { justify-self: start; padding-left: 44px; }
.system button:first-child svg { width: 44px; height: 40px; }

.edge-panel {
  position: absolute;
  top: 639px;
  right: -14px;
  width: 25px;
  height: 294px;
  border: 2px solid #aaa;
  border-radius: 12px;
  background: #f0f0f0;
}
```
